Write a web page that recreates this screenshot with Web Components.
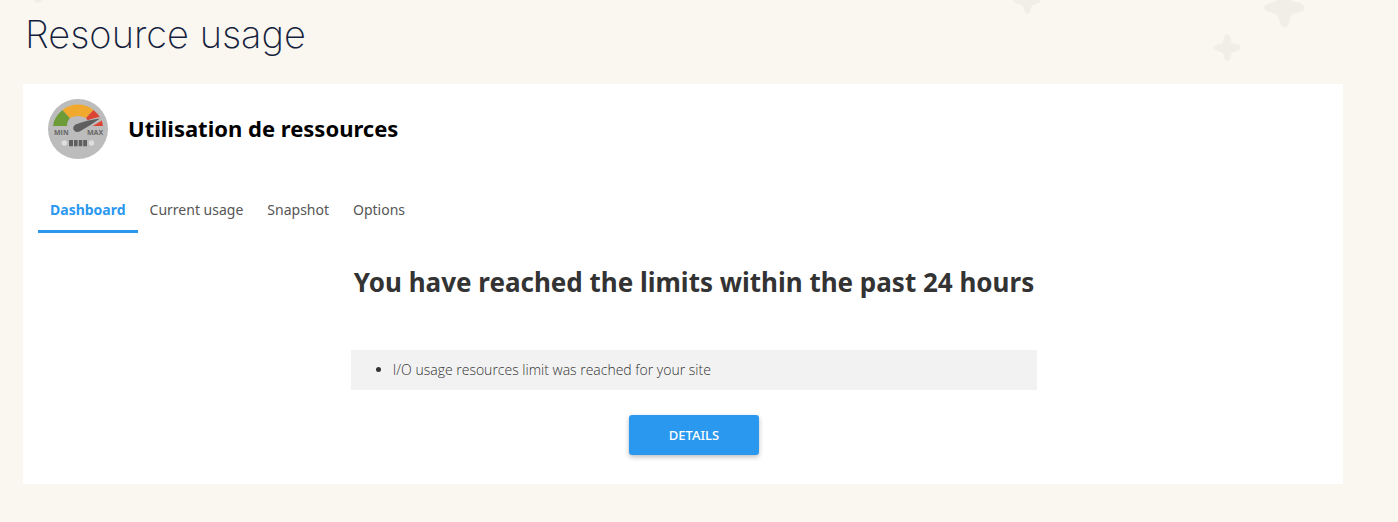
<!DOCTYPE html>
<html lang="en">
<head>
<meta charset="utf-8">
<meta name="viewport" content="width=device-width, initial-scale=1">
<title>Resource usage</title>
<style>
body { margin: 0; background: #faf7f0; color: #333; font: 14px/20px "Noto Sans", sans-serif; }
</style>
</head>
<body>
<usage-page>
  <usage-panel heading="Utilisation de ressources">
    <tab-bar slot="tabs">
      <tab-link current>Dashboard</tab-link>
      <tab-link>Current usage</tab-link>
      <tab-link>Snapshot</tab-link>
      <tab-link>Options</tab-link>
    </tab-bar>
    <limit-notice>
      <span slot="title">You have reached the limits within the past 24 hours</span>
      <span slot="reason">I/O usage resources limit was reached for your site</span>
      <action-button slot="action">DETAILS</action-button>
    </limit-notice>
  </usage-panel>
</usage-page>
<script>
const define = (name, markup, setup) => {
  const template = document.createElement('template');
  template.innerHTML = markup;
  customElements.define(name, class extends HTMLElement {
    constructor() {
      super();
      this.attachShadow({ mode: 'open' }).append(template.content.cloneNode(true));
    }
    connectedCallback() { if (setup) setup(this, this.shadowRoot); }
  });
};

define('star-field', `
<style>
:host { display: block; position: absolute; top: 0; left: 0; right: 0; height: 84px; overflow: hidden; pointer-events: none; }
svg { position: absolute; top: 0; fill: #f1eee7; }
.right { right: 0; }
.left { left: 0; }
</style>
<svg class="left" width="60" height="84" aria-hidden="true"><circle cx="38" cy="-1" r="4"/></svg>
<svg class="right" width="398" height="84" aria-hidden="true">
  <defs><path id="star" d="M0-13.500C1.600-13.500 2.600-12.500 3-11L4.300-6.500Q5-5 6.500-4.500L11-3.200C14.500-2 14.500 1.500 11 2.500L6.500 3.900Q5 4.500 4.300 6L3 10.500C2.300 13.700-1.300 13.700-2.300 10.500L-3.800 6Q-4.500 4.500-6 3.900L-10.500 2.500C-14 1.500-14-2-10.500-3L-6-4.300Q-4.500-5-4-6.500L-2.800-11C-2.200-12.500-1.500-13.500 0-13.500Z"/></defs>
  <use href="#star" x="227" y="48"/>
  <use href="#star" x="27" y="1"/>
  <use href="#star" transform="translate(284 8) scale(1.500)"/>
</svg>`);

define('gauge-icon', `
<style>:host { display: block; width: 60px; height: 60px; } svg { display: block; } text { font: 700 7px "Open Sans", sans-serif; fill: #666; }</style>
<svg width="60" height="60" viewBox="0 0 60 60" role="img" aria-label="Gauge">
  <circle cx="30" cy="30" r="30" fill="#bcbcbc"/>
  <path d="M5 27Q6 18 14.500 11L22 19Q19 22 19 27Z" fill="#6d9b37"/>
  <path d="M14.500 11Q21 5.500 30 5.500T45.500 11L38 19Q30 15 22 19Z" fill="#f0a92d"/>
  <path d="M45.500 11Q54 18 55 27H41Q41 22 38 19Z" fill="#dc4534"/>
  <path d="M26 26Q42 20 51 18Q55 19 53 22Q45 27 32 34Z" fill="#bcbcbc"/>
  <circle cx="29.500" cy="29" r="7" fill="#bcbcbc"/>
  <path d="M27.500 25.500Q39 21 52 19.500Q43 26 32.500 32C29 34.500 25 32 25.200 29Q25.500 26.500 27.500 25.500Z" fill="#5f5f5f"/>
  <text x="6" y="36">MIN</text><text x="39" y="36">MAX</text>
  <circle cx="16.300" cy="44" r="2.700" fill="#dedede"/><circle cx="43.500" cy="44" r="2.700" fill="#dedede"/>
  <path d="M21 41h4v6.300h-4zM26 41h3.600v6.300H26zM30.700 41h3.600v6.300h-3.600zM35.200 41H39v6.300h-3.800z" fill="#5f5f5f"/>
</svg>`);

define('usage-page', `
<style>
:host { display: block; position: relative; padding: 0 55px 38px 23px; }
h1 { position: relative; margin: 0; padding: 10px 2px 26px; font: 200 38px/48px Inter, sans-serif; color: #14213d; }
</style>
<star-field></star-field>
<h1>Resource usage</h1>
<main><slot></slot></main>`);

define('usage-panel', `
<style>
:host { display: block; background: #fff; padding: 15px 15px 29px; }
header { display: flex; align-items: center; gap: 20px; padding-left: 10px; margin-bottom: 28px; }
h2 { margin: 0; padding-bottom: 2px; font-size: 22px; line-height: 30px; font-weight: 700; color: #000; }
.content { padding: 31px 0 0 22px; }
</style>
<header><gauge-icon></gauge-icon><h2></h2></header>
<slot name="tabs"></slot>
<div class="content"><slot></slot></div>`,
(host, root) => { root.querySelector('h2').textContent = host.getAttribute('heading'); });

define('tab-bar', `
<style>:host { display: block; } nav { display: flex; }</style>
<nav aria-label="Resource usage"><slot></slot></nav>`);

define('tab-link', `
<style>
:host { display: block; }
a { display: block; padding: 13px 12px 10px; border-bottom: 3px solid transparent; color: #555; text-decoration: none; }
:host([current]) a { color: #2b98f0; border-color: #2b98f0; font-weight: 700; }
</style>
<a href="#"><slot></slot></a>`,
(host, root) => { if (host.hasAttribute('current')) root.querySelector('a').setAttribute('aria-current', 'page'); });

define('limit-notice', `
<style>
:host { display: flex; flex-direction: column; align-items: center; }
section { max-width: 100%; }
h3 { margin: 0 0 50px; padding: 0 3px; font-size: 26px; line-height: 36px; font-weight: 700; text-align: center; }
ul { margin: 0 0 25px; padding: 10px 10px 10px 42px; background: #f2f2f2; }
li::marker { color: #333; }
li { font: 300 14px/20px "Open Sans", sans-serif; }
.action { display: flex; justify-content: center; }
</style>
<section>
  <h3><slot name="title"></slot></h3>
  <ul><li><slot name="reason"></slot></li></ul>
  <div class="action"><slot name="action"></slot></div>
</section>`);

define('action-button', `
<style>
:host { display: block; }
button { display: block; min-width: 130px; padding: 10px 20px; border: 0; border-radius: 3px; background: #2b98f0; color: #fff; font: 500 13px/20px "Noto Sans", sans-serif; box-shadow: 0 2px 5px rgba(0, 0, 0, .26); cursor: pointer; }
</style>
<button type="button"><slot></slot></button>`);
</script>
</body>
</html>
